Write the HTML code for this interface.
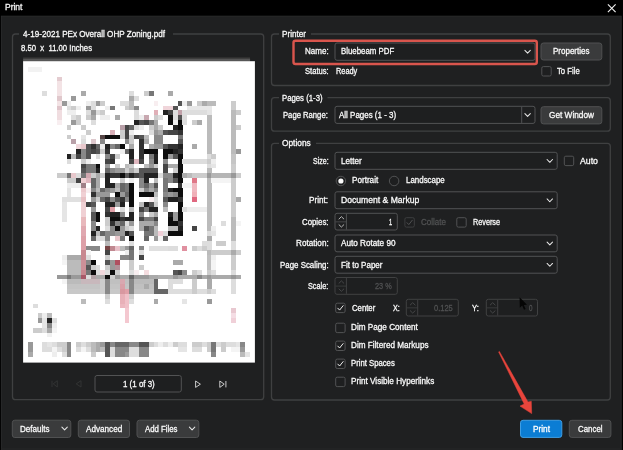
<!DOCTYPE html>
<html><head><meta charset="utf-8"><title>Print</title>
<style>
html,body{margin:0;padding:0;background:#000;}
body{width:623px;height:450px;overflow:hidden;position:relative;font-family:"Liberation Sans",sans-serif;}
.b{position:absolute;left:0;top:0}
.t{position:absolute;white-space:pre;display:block;will-change:transform;}
.u{display:block;white-space:pre;transform-origin:0 0;-webkit-text-stroke:0.3px currentColor;}
svg{overflow:visible}
</style></head><body>
<svg class="b" width="623" height="450" viewBox="0 0 623 450">
<rect x="1.4" y="16.2" width="619.8" height="434" fill="#1f2021" stroke="#2a2b2c" stroke-width="1"/>
<rect x="1.9" y="448" width="618.8" height="2" fill="#222324"/>
<defs><filter id="mb" x="-2%" y="-2%" width="104%" height="104%"><feGaussianBlur stdDeviation="0.62"/></filter></defs><rect x="23.1" y="57.0" width="227" height="2.2" fill="#2e2e2e"/><rect x="23.1" y="58.6" width="227" height="3" fill="#565656"/><rect x="23.1" y="61.2" width="231.8" height="301.4" fill="#fff"/><g filter="url(#mb)" shape-rendering="crispEdges"><rect x="27.93" y="66.91" width="14.54" height="4.88" fill="#f2f2f2"/><rect x="56.91" y="76.57" width="4.88" height="4.88" fill="#e4ccd0"/><rect x="56.91" y="81.40" width="4.88" height="4.88" fill="#f3e3e5"/><rect x="56.91" y="86.23" width="4.88" height="4.88" fill="#f3e3e5"/><rect x="42.42" y="91.06" width="4.88" height="4.88" fill="#dddddd"/><rect x="56.91" y="91.06" width="4.88" height="4.88" fill="#f3e3e5"/><rect x="81.06" y="91.06" width="4.88" height="4.88" fill="#aaaaaa"/><rect x="129.36" y="91.06" width="4.88" height="4.88" fill="#dddddd"/><rect x="143.85" y="91.06" width="4.88" height="4.88" fill="#cccccc"/><rect x="148.68" y="91.06" width="4.88" height="4.88" fill="#777777"/><rect x="168.00" y="91.06" width="4.88" height="4.88" fill="#aaaaaa"/><rect x="56.91" y="95.89" width="4.88" height="4.88" fill="#e0c8cc"/><rect x="71.40" y="95.89" width="4.88" height="4.88" fill="#999999"/><rect x="129.36" y="95.89" width="4.88" height="4.88" fill="#aaaaaa"/><rect x="134.19" y="95.89" width="4.88" height="4.88" fill="#dddddd"/><rect x="56.91" y="100.72" width="4.88" height="4.88" fill="#f3e3e5"/><rect x="61.74" y="100.72" width="4.88" height="4.88" fill="#999999"/><rect x="66.57" y="100.72" width="4.88" height="4.88" fill="#eeeeee"/><rect x="85.89" y="100.72" width="4.88" height="4.88" fill="#eeeeee"/><rect x="90.72" y="100.72" width="4.88" height="4.88" fill="#dddddd"/><rect x="95.55" y="100.72" width="4.88" height="4.88" fill="#999999"/><rect x="100.38" y="100.72" width="4.88" height="4.88" fill="#cccccc"/><rect x="119.70" y="100.72" width="9.71" height="4.88" fill="#dddddd"/><rect x="129.36" y="100.72" width="4.88" height="4.88" fill="#bbbbbb"/><rect x="153.51" y="100.72" width="4.88" height="4.88" fill="#f8eef0"/><rect x="177.66" y="100.72" width="4.88" height="4.88" fill="#555555"/><rect x="182.49" y="100.72" width="4.88" height="4.88" fill="#eeeeee"/><rect x="187.32" y="100.72" width="4.88" height="4.88" fill="#999999"/><rect x="196.98" y="100.72" width="4.88" height="4.88" fill="#cccccc"/><rect x="201.81" y="100.72" width="4.88" height="4.88" fill="#aaaaaa"/><rect x="206.64" y="100.72" width="9.71" height="4.88" fill="#bbbbbb"/><rect x="230.79" y="100.72" width="4.88" height="4.88" fill="#cccccc"/><rect x="56.91" y="105.55" width="4.88" height="4.88" fill="#dfc5ca"/><rect x="66.57" y="105.55" width="4.88" height="4.88" fill="#dddddd"/><rect x="71.40" y="105.55" width="4.88" height="4.88" fill="#cccccc"/><rect x="76.23" y="105.55" width="4.88" height="4.88" fill="#eeeeee"/><rect x="85.89" y="105.55" width="4.88" height="4.88" fill="#999999"/><rect x="90.72" y="105.55" width="4.88" height="4.88" fill="#dddddd"/><rect x="105.21" y="105.55" width="4.88" height="4.88" fill="#eeeeee"/><rect x="110.04" y="105.55" width="4.88" height="4.88" fill="#777777"/><rect x="124.53" y="105.55" width="4.88" height="4.88" fill="#cccccc"/><rect x="129.36" y="105.55" width="4.88" height="4.88" fill="#bbbbbb"/><rect x="134.19" y="105.55" width="4.88" height="4.88" fill="#888888"/><rect x="163.17" y="105.55" width="9.71" height="4.88" fill="#f0d5da"/><rect x="172.83" y="105.55" width="4.88" height="4.88" fill="#555555"/><rect x="187.32" y="105.55" width="24.20" height="4.88" fill="#e8e8e8"/><rect x="230.79" y="105.55" width="4.88" height="4.88" fill="#cccccc"/><rect x="56.91" y="110.38" width="4.88" height="4.88" fill="#f0dde0"/><rect x="66.57" y="110.38" width="9.71" height="4.88" fill="#eeeeee"/><rect x="85.89" y="110.38" width="4.88" height="4.88" fill="#dddddd"/><rect x="90.72" y="110.38" width="4.88" height="4.88" fill="#999999"/><rect x="95.55" y="110.38" width="4.88" height="4.88" fill="#dddddd"/><rect x="100.38" y="110.38" width="4.88" height="4.88" fill="#cccccc"/><rect x="134.19" y="110.38" width="4.88" height="4.88" fill="#dddddd"/><rect x="153.51" y="110.38" width="4.88" height="4.88" fill="#e0b0b8"/><rect x="163.17" y="110.38" width="4.88" height="4.88" fill="#222222"/><rect x="168.00" y="110.38" width="4.88" height="4.88" fill="#444444"/><rect x="172.83" y="110.38" width="4.88" height="4.88" fill="#dddddd"/><rect x="177.66" y="110.38" width="4.88" height="4.88" fill="#c0a0a8"/><rect x="182.49" y="110.38" width="24.20" height="4.88" fill="#dddddd"/><rect x="206.64" y="110.38" width="4.88" height="4.88" fill="#e5e5e5"/><rect x="230.79" y="110.38" width="4.88" height="4.88" fill="#bbbbbb"/><rect x="235.62" y="110.38" width="4.88" height="4.88" fill="#cccccc"/><rect x="56.91" y="115.21" width="4.88" height="4.88" fill="#f0dde0"/><rect x="71.40" y="115.21" width="4.88" height="4.88" fill="#dddddd"/><rect x="76.23" y="115.21" width="4.88" height="4.88" fill="#cccccc"/><rect x="85.89" y="115.21" width="4.88" height="4.88" fill="#cccccc"/><rect x="90.72" y="115.21" width="4.88" height="4.88" fill="#aaaaaa"/><rect x="100.38" y="115.21" width="9.71" height="4.88" fill="#eeeeee"/><rect x="114.87" y="115.21" width="4.88" height="4.88" fill="#aaaaaa"/><rect x="134.19" y="115.21" width="4.88" height="4.88" fill="#dddddd"/><rect x="139.02" y="115.21" width="4.88" height="4.88" fill="#eeeeee"/><rect x="143.85" y="115.21" width="4.88" height="4.88" fill="#c8a8b0"/><rect x="153.51" y="115.21" width="4.88" height="4.88" fill="#cccccc"/><rect x="158.34" y="115.21" width="4.88" height="4.88" fill="#dddddd"/><rect x="168.00" y="115.21" width="4.88" height="4.88" fill="#111111"/><rect x="172.83" y="115.21" width="4.88" height="4.88" fill="#dddddd"/><rect x="177.66" y="115.21" width="4.88" height="4.88" fill="#555555"/><rect x="182.49" y="115.21" width="4.88" height="4.88" fill="#dddddd"/><rect x="206.64" y="115.21" width="4.88" height="4.88" fill="#bbbbbb"/><rect x="230.79" y="115.21" width="4.88" height="4.88" fill="#bbbbbb"/><rect x="56.91" y="120.04" width="4.88" height="4.88" fill="#f8eef0"/><rect x="71.40" y="120.04" width="4.88" height="4.88" fill="#999999"/><rect x="76.23" y="120.04" width="4.88" height="4.88" fill="#cccccc"/><rect x="90.72" y="120.04" width="4.88" height="4.88" fill="#dddddd"/><rect x="134.19" y="120.04" width="4.88" height="4.88" fill="#222222"/><rect x="139.02" y="120.04" width="4.88" height="4.88" fill="#555555"/><rect x="143.85" y="120.04" width="4.88" height="4.88" fill="#444444"/><rect x="148.68" y="120.04" width="4.88" height="4.88" fill="#777777"/><rect x="153.51" y="120.04" width="4.88" height="4.88" fill="#aaaaaa"/><rect x="168.00" y="120.04" width="4.88" height="4.88" fill="#111111"/><rect x="172.83" y="120.04" width="4.88" height="4.88" fill="#eeeeee"/><rect x="177.66" y="120.04" width="4.88" height="4.88" fill="#111111"/><rect x="182.49" y="120.04" width="4.88" height="4.88" fill="#dddddd"/><rect x="192.15" y="120.04" width="4.88" height="4.88" fill="#cccccc"/><rect x="196.98" y="120.04" width="4.88" height="4.88" fill="#aaaaaa"/><rect x="206.64" y="120.04" width="4.88" height="4.88" fill="#bbbbbb"/><rect x="230.79" y="120.04" width="4.88" height="4.88" fill="#bbbbbb"/><rect x="66.57" y="124.87" width="4.88" height="4.88" fill="#cccccc"/><rect x="81.06" y="124.87" width="4.88" height="4.88" fill="#cccccc"/><rect x="119.70" y="124.87" width="4.88" height="4.88" fill="#b8a0a8"/><rect x="124.53" y="124.87" width="4.88" height="4.88" fill="#444444"/><rect x="129.36" y="124.87" width="4.88" height="4.88" fill="#666666"/><rect x="134.19" y="124.87" width="4.88" height="4.88" fill="#dddddd"/><rect x="139.02" y="124.87" width="4.88" height="4.88" fill="#eeeeee"/><rect x="148.68" y="124.87" width="4.88" height="4.88" fill="#cccccc"/><rect x="153.51" y="124.87" width="4.88" height="4.88" fill="#aaaaaa"/><rect x="158.34" y="124.87" width="4.88" height="4.88" fill="#cccccc"/><rect x="172.83" y="124.87" width="4.88" height="4.88" fill="#222222"/><rect x="177.66" y="124.87" width="4.88" height="4.88" fill="#111111"/><rect x="206.64" y="124.87" width="4.88" height="4.88" fill="#bbbbbb"/><rect x="230.79" y="124.87" width="4.88" height="4.88" fill="#bbbbbb"/><rect x="235.62" y="124.87" width="4.88" height="4.88" fill="#cccccc"/><rect x="85.89" y="129.70" width="4.88" height="4.88" fill="#cccccc"/><rect x="110.04" y="129.70" width="4.88" height="4.88" fill="#d8b0b8"/><rect x="119.70" y="129.70" width="4.88" height="4.88" fill="#cccccc"/><rect x="124.53" y="129.70" width="4.88" height="4.88" fill="#444444"/><rect x="129.36" y="129.70" width="4.88" height="4.88" fill="#eeeeee"/><rect x="148.68" y="129.70" width="4.88" height="4.88" fill="#dddddd"/><rect x="153.51" y="129.70" width="4.88" height="4.88" fill="#999999"/><rect x="158.34" y="129.70" width="4.88" height="4.88" fill="#aaaaaa"/><rect x="163.17" y="129.70" width="4.88" height="4.88" fill="#555555"/><rect x="168.00" y="129.70" width="9.71" height="4.88" fill="#444444"/><rect x="177.66" y="129.70" width="4.88" height="4.88" fill="#333333"/><rect x="206.64" y="129.70" width="4.88" height="4.88" fill="#bbbbbb"/><rect x="230.79" y="129.70" width="4.88" height="4.88" fill="#bbbbbb"/><rect x="66.57" y="134.53" width="4.88" height="4.88" fill="#cccccc"/><rect x="81.06" y="134.53" width="4.88" height="4.88" fill="#e5e5e5"/><rect x="100.38" y="134.53" width="4.88" height="4.88" fill="#554444"/><rect x="105.21" y="134.53" width="14.54" height="4.88" fill="#111111"/><rect x="119.70" y="134.53" width="4.88" height="4.88" fill="#cccccc"/><rect x="124.53" y="134.53" width="4.88" height="4.88" fill="#444444"/><rect x="129.36" y="134.53" width="4.88" height="4.88" fill="#cccccc"/><rect x="134.19" y="134.53" width="4.88" height="4.88" fill="#444444"/><rect x="139.02" y="134.53" width="4.88" height="4.88" fill="#555555"/><rect x="143.85" y="134.53" width="4.88" height="4.88" fill="#bbbbbb"/><rect x="153.51" y="134.53" width="9.71" height="4.88" fill="#888888"/><rect x="177.66" y="134.53" width="4.88" height="4.88" fill="#777777"/><rect x="206.64" y="134.53" width="4.88" height="4.88" fill="#bbbbbb"/><rect x="230.79" y="134.53" width="4.88" height="4.88" fill="#bbbbbb"/><rect x="71.40" y="139.36" width="4.88" height="4.88" fill="#b8a0a8"/><rect x="81.06" y="139.36" width="4.88" height="4.88" fill="#dddddd"/><rect x="90.72" y="139.36" width="4.88" height="4.88" fill="#ddc8cc"/><rect x="100.38" y="139.36" width="4.88" height="4.88" fill="#888888"/><rect x="124.53" y="139.36" width="4.88" height="4.88" fill="#888888"/><rect x="129.36" y="139.36" width="4.88" height="4.88" fill="#cccccc"/><rect x="139.02" y="139.36" width="4.88" height="4.88" fill="#333333"/><rect x="143.85" y="139.36" width="4.88" height="4.88" fill="#aaaaaa"/><rect x="153.51" y="139.36" width="9.71" height="4.88" fill="#888888"/><rect x="177.66" y="139.36" width="4.88" height="4.88" fill="#555555"/><rect x="206.64" y="139.36" width="4.88" height="4.88" fill="#bbbbbb"/><rect x="230.79" y="139.36" width="4.88" height="4.88" fill="#bbbbbb"/><rect x="76.23" y="144.19" width="4.88" height="4.88" fill="#f0d8dc"/><rect x="81.06" y="144.19" width="4.88" height="4.88" fill="#e8c8cc"/><rect x="85.89" y="144.19" width="4.88" height="4.88" fill="#555555"/><rect x="90.72" y="144.19" width="4.88" height="4.88" fill="#333333"/><rect x="95.55" y="144.19" width="4.88" height="4.88" fill="#666666"/><rect x="100.38" y="144.19" width="4.88" height="4.88" fill="#eeeeee"/><rect x="105.21" y="144.19" width="4.88" height="4.88" fill="#222222"/><rect x="110.04" y="144.19" width="4.88" height="4.88" fill="#888888"/><rect x="114.87" y="144.19" width="4.88" height="4.88" fill="#666666"/><rect x="119.70" y="144.19" width="4.88" height="4.88" fill="#111111"/><rect x="129.36" y="144.19" width="4.88" height="4.88" fill="#aaaaaa"/><rect x="139.02" y="144.19" width="4.88" height="4.88" fill="#333333"/><rect x="148.68" y="144.19" width="4.88" height="4.88" fill="#aaaaaa"/><rect x="153.51" y="144.19" width="9.71" height="4.88" fill="#999999"/><rect x="163.17" y="144.19" width="4.88" height="4.88" fill="#555555"/><rect x="168.00" y="144.19" width="9.71" height="4.88" fill="#333333"/><rect x="177.66" y="144.19" width="4.88" height="4.88" fill="#222222"/><rect x="192.15" y="144.19" width="4.88" height="4.88" fill="#aaaaaa"/><rect x="206.64" y="144.19" width="4.88" height="4.88" fill="#bbbbbb"/><rect x="230.79" y="144.19" width="4.88" height="4.88" fill="#bbbbbb"/><rect x="76.23" y="149.02" width="4.88" height="4.88" fill="#222222"/><rect x="81.06" y="149.02" width="4.88" height="4.88" fill="#888888"/><rect x="85.89" y="149.02" width="4.88" height="4.88" fill="#555555"/><rect x="90.72" y="149.02" width="4.88" height="4.88" fill="#444444"/><rect x="95.55" y="149.02" width="4.88" height="4.88" fill="#555555"/><rect x="100.38" y="149.02" width="4.88" height="4.88" fill="#cccccc"/><rect x="105.21" y="149.02" width="4.88" height="4.88" fill="#333333"/><rect x="119.70" y="149.02" width="4.88" height="4.88" fill="#eeeeee"/><rect x="124.53" y="149.02" width="4.88" height="4.88" fill="#666666"/><rect x="129.36" y="149.02" width="4.88" height="4.88" fill="#222222"/><rect x="139.02" y="149.02" width="4.88" height="4.88" fill="#333333"/><rect x="143.85" y="149.02" width="14.54" height="4.88" fill="#111111"/><rect x="163.17" y="149.02" width="9.71" height="4.88" fill="#111111"/><rect x="172.83" y="149.02" width="4.88" height="4.88" fill="#222222"/><rect x="177.66" y="149.02" width="4.88" height="4.88" fill="#333333"/><rect x="206.64" y="149.02" width="4.88" height="4.88" fill="#bbbbbb"/><rect x="230.79" y="149.02" width="4.88" height="4.88" fill="#bbbbbb"/><rect x="235.62" y="149.02" width="4.88" height="4.88" fill="#999999"/><rect x="66.57" y="153.85" width="4.88" height="4.88" fill="#222222"/><rect x="71.40" y="153.85" width="4.88" height="4.88" fill="#bbbbbb"/><rect x="76.23" y="153.85" width="4.88" height="4.88" fill="#444444"/><rect x="81.06" y="153.85" width="4.88" height="4.88" fill="#888888"/><rect x="85.89" y="153.85" width="4.88" height="4.88" fill="#555555"/><rect x="95.55" y="153.85" width="4.88" height="4.88" fill="#dddddd"/><rect x="105.21" y="153.85" width="4.88" height="4.88" fill="#888888"/><rect x="110.04" y="153.85" width="4.88" height="4.88" fill="#444444"/><rect x="114.87" y="153.85" width="4.88" height="4.88" fill="#cccccc"/><rect x="129.36" y="153.85" width="4.88" height="4.88" fill="#222222"/><rect x="139.02" y="153.85" width="4.88" height="4.88" fill="#333333"/><rect x="148.68" y="153.85" width="4.88" height="4.88" fill="#777777"/><rect x="153.51" y="153.85" width="4.88" height="4.88" fill="#222222"/><rect x="163.17" y="153.85" width="4.88" height="4.88" fill="#111111"/><rect x="168.00" y="153.85" width="4.88" height="4.88" fill="#999999"/><rect x="172.83" y="153.85" width="4.88" height="4.88" fill="#555555"/><rect x="177.66" y="153.85" width="4.88" height="4.88" fill="#111111"/><rect x="206.64" y="153.85" width="4.88" height="4.88" fill="#dddddd"/><rect x="211.47" y="153.85" width="4.88" height="4.88" fill="#cccccc"/><rect x="230.79" y="153.85" width="4.88" height="4.88" fill="#c5c5c5"/><rect x="66.57" y="158.68" width="4.88" height="4.88" fill="#dddddd"/><rect x="81.06" y="158.68" width="4.88" height="4.88" fill="#cccccc"/><rect x="85.89" y="158.68" width="4.88" height="4.88" fill="#eeeeee"/><rect x="105.21" y="158.68" width="4.88" height="4.88" fill="#444444"/><rect x="110.04" y="158.68" width="4.88" height="4.88" fill="#333333"/><rect x="129.36" y="158.68" width="4.88" height="4.88" fill="#444444"/><rect x="134.19" y="158.68" width="4.88" height="4.88" fill="#e0b8c0"/><rect x="139.02" y="158.68" width="4.88" height="4.88" fill="#444444"/><rect x="148.68" y="158.68" width="4.88" height="4.88" fill="#888888"/><rect x="153.51" y="158.68" width="4.88" height="4.88" fill="#222222"/><rect x="163.17" y="158.68" width="4.88" height="4.88" fill="#888888"/><rect x="177.66" y="158.68" width="4.88" height="4.88" fill="#111111"/><rect x="182.49" y="158.68" width="24.20" height="4.88" fill="#dddddd"/><rect x="206.64" y="158.68" width="4.88" height="4.88" fill="#cccccc"/><rect x="211.47" y="158.68" width="4.88" height="4.88" fill="#eeeeee"/><rect x="230.79" y="158.68" width="4.88" height="4.88" fill="#c5c5c5"/><rect x="81.06" y="163.51" width="4.88" height="4.88" fill="#444444"/><rect x="85.89" y="163.51" width="9.71" height="4.88" fill="#777777"/><rect x="95.55" y="163.51" width="4.88" height="4.88" fill="#111111"/><rect x="105.21" y="163.51" width="4.88" height="4.88" fill="#999999"/><rect x="114.87" y="163.51" width="4.88" height="4.88" fill="#cccccc"/><rect x="124.53" y="163.51" width="4.88" height="4.88" fill="#bbbbbb"/><rect x="129.36" y="163.51" width="4.88" height="4.88" fill="#cccccc"/><rect x="143.85" y="163.51" width="4.88" height="4.88" fill="#bbbbbb"/><rect x="148.68" y="163.51" width="4.88" height="4.88" fill="#999999"/><rect x="153.51" y="163.51" width="4.88" height="4.88" fill="#cccccc"/><rect x="163.17" y="163.51" width="4.88" height="4.88" fill="#444444"/><rect x="168.00" y="163.51" width="9.71" height="4.88" fill="#aaaaaa"/><rect x="177.66" y="163.51" width="4.88" height="4.88" fill="#111111"/><rect x="206.64" y="163.51" width="4.88" height="4.88" fill="#dddddd"/><rect x="211.47" y="163.51" width="4.88" height="4.88" fill="#e5e5e5"/><rect x="230.79" y="163.51" width="4.88" height="4.88" fill="#cccccc"/><rect x="81.06" y="168.34" width="4.88" height="4.88" fill="#555555"/><rect x="85.89" y="168.34" width="9.71" height="4.88" fill="#777777"/><rect x="95.55" y="168.34" width="4.88" height="4.88" fill="#222222"/><rect x="105.21" y="168.34" width="4.88" height="4.88" fill="#666666"/><rect x="110.04" y="168.34" width="4.88" height="4.88" fill="#888888"/><rect x="114.87" y="168.34" width="9.71" height="4.88" fill="#999999"/><rect x="124.53" y="168.34" width="4.88" height="4.88" fill="#cccccc"/><rect x="129.36" y="168.34" width="4.88" height="4.88" fill="#aaaaaa"/><rect x="134.19" y="168.34" width="4.88" height="4.88" fill="#cccccc"/><rect x="139.02" y="168.34" width="19.37" height="4.88" fill="#555555"/><rect x="163.17" y="168.34" width="4.88" height="4.88" fill="#444444"/><rect x="172.83" y="168.34" width="4.88" height="4.88" fill="#cccccc"/><rect x="177.66" y="168.34" width="4.88" height="4.88" fill="#111111"/><rect x="206.64" y="168.34" width="4.88" height="4.88" fill="#bbbbbb"/><rect x="230.79" y="168.34" width="4.88" height="4.88" fill="#cccccc"/><rect x="56.91" y="173.17" width="9.71" height="4.88" fill="#cccccc"/><rect x="66.57" y="173.17" width="4.88" height="4.88" fill="#777777"/><rect x="71.40" y="173.17" width="4.88" height="4.88" fill="#e8c8cc"/><rect x="76.23" y="173.17" width="4.88" height="4.88" fill="#dddddd"/><rect x="81.06" y="173.17" width="4.88" height="4.88" fill="#777777"/><rect x="85.89" y="173.17" width="4.88" height="4.88" fill="#d0a8b0"/><rect x="90.72" y="173.17" width="4.88" height="4.88" fill="#cccccc"/><rect x="95.55" y="173.17" width="4.88" height="4.88" fill="#aaaaaa"/><rect x="100.38" y="173.17" width="4.88" height="4.88" fill="#cccccc"/><rect x="105.21" y="173.17" width="4.88" height="4.88" fill="#222222"/><rect x="110.04" y="173.17" width="9.71" height="4.88" fill="#333333"/><rect x="119.70" y="173.17" width="4.88" height="4.88" fill="#111111"/><rect x="124.53" y="173.17" width="4.88" height="4.88" fill="#555555"/><rect x="129.36" y="173.17" width="4.88" height="4.88" fill="#222222"/><rect x="134.19" y="173.17" width="4.88" height="4.88" fill="#444444"/><rect x="139.02" y="173.17" width="4.88" height="4.88" fill="#555555"/><rect x="143.85" y="173.17" width="14.54" height="4.88" fill="#222222"/><rect x="158.34" y="173.17" width="4.88" height="4.88" fill="#dddddd"/><rect x="163.17" y="173.17" width="9.71" height="4.88" fill="#888888"/><rect x="172.83" y="173.17" width="4.88" height="4.88" fill="#222222"/><rect x="177.66" y="173.17" width="4.88" height="4.88" fill="#111111"/><rect x="182.49" y="173.17" width="4.88" height="4.88" fill="#aaaaaa"/><rect x="187.32" y="173.17" width="4.88" height="4.88" fill="#bbbbbb"/><rect x="192.15" y="173.17" width="14.54" height="4.88" fill="#cccccc"/><rect x="206.64" y="173.17" width="4.88" height="4.88" fill="#999999"/><rect x="211.47" y="173.17" width="19.37" height="4.88" fill="#b5b5b5"/><rect x="230.79" y="173.17" width="4.88" height="4.88" fill="#999999"/><rect x="235.62" y="173.17" width="4.88" height="4.88" fill="#cccccc"/><rect x="66.57" y="178.00" width="9.71" height="4.88" fill="#cccccc"/><rect x="76.23" y="178.00" width="4.88" height="4.88" fill="#444444"/><rect x="81.06" y="178.00" width="4.88" height="4.88" fill="#f0d0d4"/><rect x="85.89" y="178.00" width="4.88" height="4.88" fill="#e0b8c0"/><rect x="90.72" y="178.00" width="4.88" height="4.88" fill="#666666"/><rect x="95.55" y="178.00" width="4.88" height="4.88" fill="#aaaaaa"/><rect x="105.21" y="178.00" width="4.88" height="4.88" fill="#222222"/><rect x="119.70" y="178.00" width="4.88" height="4.88" fill="#cccccc"/><rect x="129.36" y="178.00" width="4.88" height="4.88" fill="#eeeeee"/><rect x="139.02" y="178.00" width="4.88" height="4.88" fill="#888888"/><rect x="143.85" y="178.00" width="4.88" height="4.88" fill="#222222"/><rect x="153.51" y="178.00" width="4.88" height="4.88" fill="#bbbbbb"/><rect x="163.17" y="178.00" width="4.88" height="4.88" fill="#777777"/><rect x="168.00" y="178.00" width="4.88" height="4.88" fill="#888888"/><rect x="172.83" y="178.00" width="4.88" height="4.88" fill="#555555"/><rect x="177.66" y="178.00" width="4.88" height="4.88" fill="#111111"/><rect x="192.15" y="178.00" width="4.88" height="4.88" fill="#e07888"/><rect x="206.64" y="178.00" width="4.88" height="4.88" fill="#bbbbbb"/><rect x="211.47" y="178.00" width="19.37" height="4.88" fill="#f4f4f4"/><rect x="230.79" y="178.00" width="4.88" height="4.88" fill="#cccccc"/><rect x="66.57" y="182.83" width="14.54" height="4.88" fill="#eeeeee"/><rect x="81.06" y="182.83" width="4.88" height="4.88" fill="#a08088"/><rect x="90.72" y="182.83" width="4.88" height="4.88" fill="#666666"/><rect x="95.55" y="182.83" width="4.88" height="4.88" fill="#aaaaaa"/><rect x="105.21" y="182.83" width="9.71" height="4.88" fill="#222222"/><rect x="114.87" y="182.83" width="4.88" height="4.88" fill="#aaaaaa"/><rect x="119.70" y="182.83" width="4.88" height="4.88" fill="#666666"/><rect x="124.53" y="182.83" width="4.88" height="4.88" fill="#777777"/><rect x="129.36" y="182.83" width="4.88" height="4.88" fill="#111111"/><rect x="139.02" y="182.83" width="4.88" height="4.88" fill="#888888"/><rect x="143.85" y="182.83" width="4.88" height="4.88" fill="#666666"/><rect x="148.68" y="182.83" width="4.88" height="4.88" fill="#999999"/><rect x="153.51" y="182.83" width="4.88" height="4.88" fill="#555555"/><rect x="163.17" y="182.83" width="4.88" height="4.88" fill="#777777"/><rect x="177.66" y="182.83" width="4.88" height="4.88" fill="#333333"/><rect x="182.49" y="182.83" width="9.71" height="4.88" fill="#f4f4f4"/><rect x="192.15" y="182.83" width="4.88" height="4.88" fill="#f0b8c0"/><rect x="206.64" y="182.83" width="4.88" height="4.88" fill="#bbbbbb"/><rect x="230.79" y="182.83" width="4.88" height="4.88" fill="#cccccc"/><rect x="66.57" y="187.66" width="4.88" height="4.88" fill="#e5e5e5"/><rect x="81.06" y="187.66" width="4.88" height="4.88" fill="#ecc8cc"/><rect x="85.89" y="187.66" width="4.88" height="4.88" fill="#f8eef0"/><rect x="90.72" y="187.66" width="4.88" height="4.88" fill="#888888"/><rect x="95.55" y="187.66" width="4.88" height="4.88" fill="#bbbbbb"/><rect x="100.38" y="187.66" width="4.88" height="4.88" fill="#666666"/><rect x="105.21" y="187.66" width="4.88" height="4.88" fill="#888888"/><rect x="110.04" y="187.66" width="4.88" height="4.88" fill="#999999"/><rect x="114.87" y="187.66" width="4.88" height="4.88" fill="#bbbbbb"/><rect x="119.70" y="187.66" width="4.88" height="4.88" fill="#666666"/><rect x="124.53" y="187.66" width="4.88" height="4.88" fill="#777777"/><rect x="129.36" y="187.66" width="4.88" height="4.88" fill="#111111"/><rect x="139.02" y="187.66" width="4.88" height="4.88" fill="#cccccc"/><rect x="143.85" y="187.66" width="4.88" height="4.88" fill="#888888"/><rect x="148.68" y="187.66" width="4.88" height="4.88" fill="#aaaaaa"/><rect x="153.51" y="187.66" width="4.88" height="4.88" fill="#888888"/><rect x="163.17" y="187.66" width="4.88" height="4.88" fill="#777777"/><rect x="168.00" y="187.66" width="4.88" height="4.88" fill="#222222"/><rect x="172.83" y="187.66" width="9.71" height="4.88" fill="#111111"/><rect x="192.15" y="187.66" width="4.88" height="4.88" fill="#f0b8c0"/><rect x="206.64" y="187.66" width="4.88" height="4.88" fill="#bbbbbb"/><rect x="230.79" y="187.66" width="4.88" height="4.88" fill="#cccccc"/><rect x="66.57" y="192.49" width="4.88" height="4.88" fill="#e5e5e5"/><rect x="81.06" y="192.49" width="4.88" height="4.88" fill="#f0d0d4"/><rect x="90.72" y="192.49" width="4.88" height="4.88" fill="#333333"/><rect x="95.55" y="192.49" width="14.54" height="4.88" fill="#999999"/><rect x="114.87" y="192.49" width="4.88" height="4.88" fill="#111111"/><rect x="119.70" y="192.49" width="4.88" height="4.88" fill="#999999"/><rect x="124.53" y="192.49" width="4.88" height="4.88" fill="#666666"/><rect x="129.36" y="192.49" width="4.88" height="4.88" fill="#111111"/><rect x="139.02" y="192.49" width="14.54" height="4.88" fill="#111111"/><rect x="153.51" y="192.49" width="4.88" height="4.88" fill="#bbbbbb"/><rect x="163.17" y="192.49" width="4.88" height="4.88" fill="#888888"/><rect x="168.00" y="192.49" width="4.88" height="4.88" fill="#999999"/><rect x="172.83" y="192.49" width="4.88" height="4.88" fill="#888888"/><rect x="177.66" y="192.49" width="4.88" height="4.88" fill="#111111"/><rect x="192.15" y="192.49" width="4.88" height="4.88" fill="#f0b0b8"/><rect x="206.64" y="192.49" width="4.88" height="4.88" fill="#bbbbbb"/><rect x="230.79" y="192.49" width="4.88" height="4.88" fill="#cccccc"/><rect x="61.74" y="197.32" width="19.37" height="4.88" fill="#e0e0e0"/><rect x="81.06" y="197.32" width="4.88" height="4.88" fill="#e8c0c4"/><rect x="90.72" y="197.32" width="4.88" height="4.88" fill="#999999"/><rect x="95.55" y="197.32" width="4.88" height="4.88" fill="#cccccc"/><rect x="100.38" y="197.32" width="4.88" height="4.88" fill="#666666"/><rect x="105.21" y="197.32" width="4.88" height="4.88" fill="#444444"/><rect x="110.04" y="197.32" width="4.88" height="4.88" fill="#888888"/><rect x="114.87" y="197.32" width="4.88" height="4.88" fill="#555555"/><rect x="119.70" y="197.32" width="4.88" height="4.88" fill="#333333"/><rect x="124.53" y="197.32" width="4.88" height="4.88" fill="#888888"/><rect x="129.36" y="197.32" width="4.88" height="4.88" fill="#111111"/><rect x="148.68" y="197.32" width="4.88" height="4.88" fill="#f8eef0"/><rect x="153.51" y="197.32" width="4.88" height="4.88" fill="#dddddd"/><rect x="163.17" y="197.32" width="4.88" height="4.88" fill="#555555"/><rect x="168.00" y="197.32" width="9.71" height="4.88" fill="#222222"/><rect x="177.66" y="197.32" width="4.88" height="4.88" fill="#333333"/><rect x="192.15" y="197.32" width="4.88" height="4.88" fill="#e06880"/><rect x="206.64" y="197.32" width="4.88" height="4.88" fill="#bbbbbb"/><rect x="230.79" y="197.32" width="4.88" height="4.88" fill="#cccccc"/><rect x="235.62" y="197.32" width="4.88" height="4.88" fill="#aaaaaa"/><rect x="61.74" y="202.15" width="4.88" height="4.88" fill="#e5e5e5"/><rect x="81.06" y="202.15" width="4.88" height="4.88" fill="#f0d0d4"/><rect x="85.89" y="202.15" width="4.88" height="4.88" fill="#444444"/><rect x="90.72" y="202.15" width="4.88" height="4.88" fill="#555555"/><rect x="105.21" y="202.15" width="9.71" height="4.88" fill="#222222"/><rect x="114.87" y="202.15" width="4.88" height="4.88" fill="#999999"/><rect x="119.70" y="202.15" width="4.88" height="4.88" fill="#222222"/><rect x="129.36" y="202.15" width="4.88" height="4.88" fill="#111111"/><rect x="139.02" y="202.15" width="4.88" height="4.88" fill="#bbbbbb"/><rect x="143.85" y="202.15" width="4.88" height="4.88" fill="#222222"/><rect x="148.68" y="202.15" width="4.88" height="4.88" fill="#555555"/><rect x="153.51" y="202.15" width="4.88" height="4.88" fill="#cccccc"/><rect x="163.17" y="202.15" width="4.88" height="4.88" fill="#888888"/><rect x="177.66" y="202.15" width="4.88" height="4.88" fill="#111111"/><rect x="206.64" y="202.15" width="4.88" height="4.88" fill="#bbbbbb"/><rect x="230.79" y="202.15" width="4.88" height="4.88" fill="#cccccc"/><rect x="61.74" y="206.98" width="4.88" height="4.88" fill="#e5e5e5"/><rect x="81.06" y="206.98" width="4.88" height="4.88" fill="#f0d0d4"/><rect x="90.72" y="206.98" width="4.88" height="4.88" fill="#999999"/><rect x="105.21" y="206.98" width="4.88" height="4.88" fill="#444444"/><rect x="110.04" y="206.98" width="4.88" height="4.88" fill="#e0a0a8"/><rect x="119.70" y="206.98" width="4.88" height="4.88" fill="#dddddd"/><rect x="129.36" y="206.98" width="4.88" height="4.88" fill="#bbbbbb"/><rect x="139.02" y="206.98" width="4.88" height="4.88" fill="#444444"/><rect x="143.85" y="206.98" width="4.88" height="4.88" fill="#777777"/><rect x="148.68" y="206.98" width="9.71" height="4.88" fill="#222222"/><rect x="163.17" y="206.98" width="4.88" height="4.88" fill="#bbbbbb"/><rect x="177.66" y="206.98" width="4.88" height="4.88" fill="#111111"/><rect x="182.49" y="206.98" width="4.88" height="4.88" fill="#dddddd"/><rect x="187.32" y="206.98" width="19.37" height="4.88" fill="#eeeeee"/><rect x="206.64" y="206.98" width="4.88" height="4.88" fill="#bbbbbb"/><rect x="230.79" y="206.98" width="4.88" height="4.88" fill="#cccccc"/><rect x="61.74" y="211.81" width="4.88" height="4.88" fill="#e5e5e5"/><rect x="81.06" y="211.81" width="4.88" height="4.88" fill="#f0d0d4"/><rect x="90.72" y="211.81" width="4.88" height="4.88" fill="#555555"/><rect x="95.55" y="211.81" width="4.88" height="4.88" fill="#111111"/><rect x="105.21" y="211.81" width="4.88" height="4.88" fill="#333333"/><rect x="110.04" y="211.81" width="9.71" height="4.88" fill="#222222"/><rect x="119.70" y="211.81" width="4.88" height="4.88" fill="#888888"/><rect x="129.36" y="211.81" width="4.88" height="4.88" fill="#222222"/><rect x="139.02" y="211.81" width="4.88" height="4.88" fill="#888888"/><rect x="148.68" y="211.81" width="4.88" height="4.88" fill="#cccccc"/><rect x="153.51" y="211.81" width="4.88" height="4.88" fill="#aaaaaa"/><rect x="168.00" y="211.81" width="4.88" height="4.88" fill="#222222"/><rect x="172.83" y="211.81" width="4.88" height="4.88" fill="#999999"/><rect x="177.66" y="211.81" width="4.88" height="4.88" fill="#111111"/><rect x="206.64" y="211.81" width="4.88" height="4.88" fill="#bbbbbb"/><rect x="230.79" y="211.81" width="4.88" height="4.88" fill="#cccccc"/><rect x="61.74" y="216.64" width="4.88" height="4.88" fill="#e5e5e5"/><rect x="81.06" y="216.64" width="4.88" height="4.88" fill="#e8b8bc"/><rect x="90.72" y="216.64" width="4.88" height="4.88" fill="#555555"/><rect x="95.55" y="216.64" width="4.88" height="4.88" fill="#111111"/><rect x="105.21" y="216.64" width="4.88" height="4.88" fill="#cccccc"/><rect x="110.04" y="216.64" width="9.71" height="4.88" fill="#111111"/><rect x="119.70" y="216.64" width="4.88" height="4.88" fill="#333333"/><rect x="124.53" y="216.64" width="9.71" height="4.88" fill="#222222"/><rect x="139.02" y="216.64" width="4.88" height="4.88" fill="#444444"/><rect x="143.85" y="216.64" width="9.71" height="4.88" fill="#777777"/><rect x="153.51" y="216.64" width="4.88" height="4.88" fill="#444444"/><rect x="168.00" y="216.64" width="4.88" height="4.88" fill="#111111"/><rect x="172.83" y="216.64" width="4.88" height="4.88" fill="#999999"/><rect x="177.66" y="216.64" width="4.88" height="4.88" fill="#111111"/><rect x="206.64" y="216.64" width="4.88" height="4.88" fill="#bbbbbb"/><rect x="230.79" y="216.64" width="4.88" height="4.88" fill="#bbbbbb"/><rect x="81.06" y="221.47" width="4.88" height="4.88" fill="#e8b8bc"/><rect x="90.72" y="221.47" width="4.88" height="4.88" fill="#888888"/><rect x="105.21" y="221.47" width="4.88" height="4.88" fill="#cccccc"/><rect x="110.04" y="221.47" width="4.88" height="4.88" fill="#333333"/><rect x="114.87" y="221.47" width="4.88" height="4.88" fill="#888888"/><rect x="119.70" y="221.47" width="4.88" height="4.88" fill="#666666"/><rect x="124.53" y="221.47" width="4.88" height="4.88" fill="#dddddd"/><rect x="129.36" y="221.47" width="4.88" height="4.88" fill="#999999"/><rect x="139.02" y="221.47" width="14.54" height="4.88" fill="#aaaaaa"/><rect x="153.51" y="221.47" width="4.88" height="4.88" fill="#888888"/><rect x="168.00" y="221.47" width="9.71" height="4.88" fill="#111111"/><rect x="177.66" y="221.47" width="4.88" height="4.88" fill="#333333"/><rect x="206.64" y="221.47" width="4.88" height="4.88" fill="#bbbbbb"/><rect x="221.13" y="221.47" width="4.88" height="4.88" fill="#dddddd"/><rect x="230.79" y="221.47" width="4.88" height="4.88" fill="#bbbbbb"/><rect x="235.62" y="221.47" width="4.88" height="4.88" fill="#f4f4f4"/><rect x="81.06" y="226.30" width="4.88" height="4.88" fill="#e0a8b0"/><rect x="90.72" y="226.30" width="4.88" height="4.88" fill="#888888"/><rect x="95.55" y="226.30" width="4.88" height="4.88" fill="#222222"/><rect x="105.21" y="226.30" width="4.88" height="4.88" fill="#dddddd"/><rect x="110.04" y="226.30" width="4.88" height="4.88" fill="#888888"/><rect x="114.87" y="226.30" width="4.88" height="4.88" fill="#111111"/><rect x="119.70" y="226.30" width="4.88" height="4.88" fill="#999999"/><rect x="124.53" y="226.30" width="4.88" height="4.88" fill="#cccccc"/><rect x="129.36" y="226.30" width="4.88" height="4.88" fill="#dddddd"/><rect x="139.02" y="226.30" width="4.88" height="4.88" fill="#aaaaaa"/><rect x="143.85" y="226.30" width="4.88" height="4.88" fill="#555555"/><rect x="148.68" y="226.30" width="4.88" height="4.88" fill="#777777"/><rect x="153.51" y="226.30" width="4.88" height="4.88" fill="#bbbbbb"/><rect x="168.00" y="226.30" width="9.71" height="4.88" fill="#bbbbbb"/><rect x="177.66" y="226.30" width="4.88" height="4.88" fill="#222222"/><rect x="192.15" y="226.30" width="4.88" height="4.88" fill="#444444"/><rect x="206.64" y="226.30" width="4.88" height="4.88" fill="#bbbbbb"/><rect x="211.47" y="226.30" width="4.88" height="4.88" fill="#eeeeee"/><rect x="230.79" y="226.30" width="4.88" height="4.88" fill="#bbbbbb"/><rect x="81.06" y="231.13" width="4.88" height="4.88" fill="#e0a8b0"/><rect x="90.72" y="231.13" width="4.88" height="4.88" fill="#222222"/><rect x="95.55" y="231.13" width="4.88" height="4.88" fill="#bbbbbb"/><rect x="100.38" y="231.13" width="4.88" height="4.88" fill="#666666"/><rect x="105.21" y="231.13" width="9.71" height="4.88" fill="#888888"/><rect x="114.87" y="231.13" width="9.71" height="4.88" fill="#999999"/><rect x="124.53" y="231.13" width="4.88" height="4.88" fill="#222222"/><rect x="129.36" y="231.13" width="4.88" height="4.88" fill="#555555"/><rect x="143.85" y="231.13" width="9.71" height="4.88" fill="#777777"/><rect x="153.51" y="231.13" width="4.88" height="4.88" fill="#bbbbbb"/><rect x="158.34" y="231.13" width="4.88" height="4.88" fill="#f0d0d8"/><rect x="163.17" y="231.13" width="4.88" height="4.88" fill="#dddddd"/><rect x="168.00" y="231.13" width="14.54" height="4.88" fill="#111111"/><rect x="206.64" y="231.13" width="4.88" height="4.88" fill="#dddddd"/><rect x="211.47" y="231.13" width="4.88" height="4.88" fill="#e5e5e5"/><rect x="230.79" y="231.13" width="4.88" height="4.88" fill="#bbbbbb"/><rect x="81.06" y="235.96" width="4.88" height="4.88" fill="#dda0a8"/><rect x="90.72" y="235.96" width="4.88" height="4.88" fill="#666666"/><rect x="95.55" y="235.96" width="9.71" height="4.88" fill="#dddddd"/><rect x="105.21" y="235.96" width="4.88" height="4.88" fill="#888888"/><rect x="114.87" y="235.96" width="4.88" height="4.88" fill="#e8c8cc"/><rect x="119.70" y="235.96" width="4.88" height="4.88" fill="#777777"/><rect x="129.36" y="235.96" width="4.88" height="4.88" fill="#111111"/><rect x="143.85" y="235.96" width="4.88" height="4.88" fill="#666666"/><rect x="153.51" y="235.96" width="4.88" height="4.88" fill="#999999"/><rect x="158.34" y="235.96" width="4.88" height="4.88" fill="#f4f4f4"/><rect x="163.17" y="235.96" width="4.88" height="4.88" fill="#666666"/><rect x="206.64" y="235.96" width="4.88" height="4.88" fill="#aaaaaa"/><rect x="230.79" y="235.96" width="4.88" height="4.88" fill="#bbbbbb"/><rect x="81.06" y="240.79" width="4.88" height="4.88" fill="#dda0a8"/><rect x="105.21" y="240.79" width="4.88" height="4.88" fill="#bbbbbb"/><rect x="129.36" y="240.79" width="4.88" height="4.88" fill="#dddddd"/><rect x="201.81" y="240.79" width="9.71" height="4.88" fill="#dddddd"/><rect x="216.30" y="240.79" width="9.71" height="4.88" fill="#cccccc"/><rect x="230.79" y="240.79" width="4.88" height="4.88" fill="#dddddd"/><rect x="81.06" y="245.62" width="4.88" height="4.88" fill="#dda0a8"/><rect x="85.89" y="245.62" width="14.54" height="4.88" fill="#888888"/><rect x="105.21" y="245.62" width="4.88" height="4.88" fill="#774444"/><rect x="110.04" y="245.62" width="4.88" height="4.88" fill="#c08890"/><rect x="114.87" y="245.62" width="4.88" height="4.88" fill="#e8c0c8"/><rect x="119.70" y="245.62" width="4.88" height="4.88" fill="#bbbbbb"/><rect x="124.53" y="245.62" width="4.88" height="4.88" fill="#999999"/><rect x="129.36" y="245.62" width="4.88" height="4.88" fill="#666666"/><rect x="139.02" y="245.62" width="4.88" height="4.88" fill="#888888"/><rect x="148.68" y="245.62" width="19.37" height="4.88" fill="#e0e0e0"/><rect x="168.00" y="245.62" width="9.71" height="4.88" fill="#dddddd"/><rect x="182.49" y="245.62" width="4.88" height="4.88" fill="#e090a0"/><rect x="192.15" y="245.62" width="4.88" height="4.88" fill="#cccccc"/><rect x="196.98" y="245.62" width="4.88" height="4.88" fill="#dddddd"/><rect x="201.81" y="245.62" width="4.88" height="4.88" fill="#cccccc"/><rect x="206.64" y="245.62" width="4.88" height="4.88" fill="#dddddd"/><rect x="230.79" y="245.62" width="4.88" height="4.88" fill="#dddddd"/><rect x="81.06" y="250.45" width="4.88" height="4.88" fill="#c88890"/><rect x="85.89" y="250.45" width="4.88" height="4.88" fill="#f4f4f4"/><rect x="105.21" y="250.45" width="4.88" height="4.88" fill="#444444"/><rect x="124.53" y="250.45" width="4.88" height="4.88" fill="#eeeeee"/><rect x="129.36" y="250.45" width="4.88" height="4.88" fill="#777777"/><rect x="139.02" y="250.45" width="4.88" height="4.88" fill="#dddddd"/><rect x="206.64" y="250.45" width="4.88" height="4.88" fill="#bbbbbb"/><rect x="211.47" y="250.45" width="19.37" height="4.88" fill="#cccccc"/><rect x="230.79" y="250.45" width="4.88" height="4.88" fill="#aaaaaa"/><rect x="235.62" y="250.45" width="4.88" height="4.88" fill="#cccccc"/><rect x="61.74" y="255.28" width="4.88" height="4.88" fill="#eeeeee"/><rect x="66.57" y="255.28" width="14.54" height="4.88" fill="#aaaaaa"/><rect x="81.06" y="255.28" width="4.88" height="4.88" fill="#c88890"/><rect x="85.89" y="255.28" width="4.88" height="4.88" fill="#dddddd"/><rect x="105.21" y="255.28" width="4.88" height="4.88" fill="#cccccc"/><rect x="119.70" y="255.28" width="9.71" height="4.88" fill="#888888"/><rect x="129.36" y="255.28" width="4.88" height="4.88" fill="#777777"/><rect x="139.02" y="255.28" width="4.88" height="4.88" fill="#444444"/><rect x="206.64" y="255.28" width="4.88" height="4.88" fill="#c0c0c0"/><rect x="211.47" y="255.28" width="4.88" height="4.88" fill="#eeeeee"/><rect x="230.79" y="255.28" width="4.88" height="4.88" fill="#cccccc"/><rect x="61.74" y="260.11" width="4.88" height="4.88" fill="#f4f4f4"/><rect x="66.57" y="260.11" width="14.54" height="4.88" fill="#bbbbbb"/><rect x="81.06" y="260.11" width="4.88" height="4.88" fill="#cc9098"/><rect x="85.89" y="260.11" width="4.88" height="4.88" fill="#888888"/><rect x="90.72" y="260.11" width="4.88" height="4.88" fill="#111111"/><rect x="105.21" y="260.11" width="4.88" height="4.88" fill="#555555"/><rect x="110.04" y="260.11" width="4.88" height="4.88" fill="#999999"/><rect x="114.87" y="260.11" width="4.88" height="4.88" fill="#b05060"/><rect x="129.36" y="260.11" width="4.88" height="4.88" fill="#cccccc"/><rect x="172.83" y="260.11" width="9.71" height="4.88" fill="#aaaaaa"/><rect x="206.64" y="260.11" width="4.88" height="4.88" fill="#c0c0c0"/><rect x="211.47" y="260.11" width="4.88" height="4.88" fill="#f4f4f4"/><rect x="230.79" y="260.11" width="4.88" height="4.88" fill="#cccccc"/><rect x="66.57" y="264.94" width="14.54" height="4.88" fill="#bbbbbb"/><rect x="81.06" y="264.94" width="4.88" height="4.88" fill="#cc9098"/><rect x="85.89" y="264.94" width="4.88" height="4.88" fill="#555555"/><rect x="90.72" y="264.94" width="4.88" height="4.88" fill="#cccccc"/><rect x="95.55" y="264.94" width="4.88" height="4.88" fill="#dddddd"/><rect x="105.21" y="264.94" width="4.88" height="4.88" fill="#cccccc"/><rect x="110.04" y="264.94" width="4.88" height="4.88" fill="#999999"/><rect x="114.87" y="264.94" width="4.88" height="4.88" fill="#b09098"/><rect x="129.36" y="264.94" width="4.88" height="4.88" fill="#cccccc"/><rect x="139.02" y="264.94" width="4.88" height="4.88" fill="#cccccc"/><rect x="206.64" y="264.94" width="4.88" height="4.88" fill="#c0c0c0"/><rect x="211.47" y="264.94" width="4.88" height="4.88" fill="#f4f4f4"/><rect x="230.79" y="264.94" width="4.88" height="4.88" fill="#cccccc"/><rect x="66.57" y="269.77" width="14.54" height="4.88" fill="#bbbbbb"/><rect x="81.06" y="269.77" width="4.88" height="4.88" fill="#c88890"/><rect x="85.89" y="269.77" width="4.88" height="4.88" fill="#777777"/><rect x="90.72" y="269.77" width="4.88" height="4.88" fill="#111111"/><rect x="95.55" y="269.77" width="4.88" height="4.88" fill="#dddddd"/><rect x="100.38" y="269.77" width="4.88" height="4.88" fill="#f0d8dc"/><rect x="105.21" y="269.77" width="4.88" height="4.88" fill="#dddddd"/><rect x="110.04" y="269.77" width="4.88" height="4.88" fill="#111111"/><rect x="114.87" y="269.77" width="4.88" height="4.88" fill="#cccccc"/><rect x="129.36" y="269.77" width="4.88" height="4.88" fill="#dddddd"/><rect x="134.19" y="269.77" width="4.88" height="4.88" fill="#f8eef0"/><rect x="143.85" y="269.77" width="4.88" height="4.88" fill="#f4dde0"/><rect x="172.83" y="269.77" width="4.88" height="4.88" fill="#555555"/><rect x="177.66" y="269.77" width="4.88" height="4.88" fill="#444444"/><rect x="182.49" y="269.77" width="4.88" height="4.88" fill="#888888"/><rect x="192.15" y="269.77" width="4.88" height="4.88" fill="#cccccc"/><rect x="196.98" y="269.77" width="4.88" height="4.88" fill="#dddddd"/><rect x="206.64" y="269.77" width="4.88" height="4.88" fill="#cccccc"/><rect x="211.47" y="269.77" width="4.88" height="4.88" fill="#dddddd"/><rect x="230.79" y="269.77" width="4.88" height="4.88" fill="#dddddd"/><rect x="56.91" y="274.60" width="9.71" height="4.88" fill="#999999"/><rect x="66.57" y="274.60" width="4.88" height="4.88" fill="#777777"/><rect x="71.40" y="274.60" width="9.71" height="4.88" fill="#999999"/><rect x="81.06" y="274.60" width="4.88" height="4.88" fill="#a85868"/><rect x="85.89" y="274.60" width="4.88" height="4.88" fill="#dddddd"/><rect x="90.72" y="274.60" width="4.88" height="4.88" fill="#b0a0a4"/><rect x="95.55" y="274.60" width="9.71" height="4.88" fill="#aaaaaa"/><rect x="105.21" y="274.60" width="4.88" height="4.88" fill="#111111"/><rect x="110.04" y="274.60" width="4.88" height="4.88" fill="#cccccc"/><rect x="114.87" y="274.60" width="4.88" height="4.88" fill="#999999"/><rect x="119.70" y="274.60" width="9.71" height="4.88" fill="#aaaaaa"/><rect x="129.36" y="274.60" width="4.88" height="4.88" fill="#666666"/><rect x="134.19" y="274.60" width="14.54" height="4.88" fill="#999999"/><rect x="148.68" y="274.60" width="9.71" height="4.88" fill="#aaaaaa"/><rect x="158.34" y="274.60" width="14.54" height="4.88" fill="#b0b0b0"/><rect x="172.83" y="274.60" width="4.88" height="4.88" fill="#999999"/><rect x="177.66" y="274.60" width="19.37" height="4.88" fill="#aaaaaa"/><rect x="196.98" y="274.60" width="4.88" height="4.88" fill="#888888"/><rect x="201.81" y="274.60" width="4.88" height="4.88" fill="#aaaaaa"/><rect x="206.64" y="274.60" width="4.88" height="4.88" fill="#999999"/><rect x="211.47" y="274.60" width="19.37" height="4.88" fill="#aaaaaa"/><rect x="230.79" y="274.60" width="4.88" height="4.88" fill="#999999"/><rect x="235.62" y="274.60" width="4.88" height="4.88" fill="#aaaaaa"/><rect x="61.74" y="279.43" width="4.88" height="4.88" fill="#f4f4f4"/><rect x="66.57" y="279.43" width="14.54" height="4.88" fill="#bbbbbb"/><rect x="81.06" y="279.43" width="19.37" height="4.88" fill="#c8b8bc"/><rect x="100.38" y="279.43" width="4.88" height="4.88" fill="#cccccc"/><rect x="105.21" y="279.43" width="4.88" height="4.88" fill="#888888"/><rect x="110.04" y="279.43" width="9.71" height="4.88" fill="#c0c0c0"/><rect x="119.70" y="279.43" width="4.88" height="4.88" fill="#d8a8b0"/><rect x="124.53" y="279.43" width="4.88" height="4.88" fill="#c0c0c0"/><rect x="129.36" y="279.43" width="4.88" height="4.88" fill="#888888"/><rect x="134.19" y="279.43" width="19.37" height="4.88" fill="#bbbbbb"/><rect x="153.51" y="279.43" width="4.88" height="4.88" fill="#666666"/><rect x="168.00" y="279.43" width="14.54" height="4.88" fill="#dddddd"/><rect x="192.15" y="279.43" width="4.88" height="4.88" fill="#cccccc"/><rect x="206.64" y="279.43" width="4.88" height="4.88" fill="#aaaaaa"/><rect x="230.79" y="279.43" width="4.88" height="4.88" fill="#dddddd"/><rect x="66.57" y="284.26" width="33.86" height="4.88" fill="#c4c4c4"/><rect x="100.38" y="284.26" width="4.88" height="4.88" fill="#cccccc"/><rect x="105.21" y="284.26" width="4.88" height="4.88" fill="#888888"/><rect x="110.04" y="284.26" width="9.71" height="4.88" fill="#c4c4c4"/><rect x="119.70" y="284.26" width="4.88" height="4.88" fill="#d8a0a8"/><rect x="124.53" y="284.26" width="4.88" height="4.88" fill="#c4c4c4"/><rect x="129.36" y="284.26" width="4.88" height="4.88" fill="#888888"/><rect x="134.19" y="284.26" width="9.71" height="4.88" fill="#c0c0c0"/><rect x="143.85" y="284.26" width="4.88" height="4.88" fill="#aaaaaa"/><rect x="148.68" y="284.26" width="4.88" height="4.88" fill="#c0c0c0"/><rect x="153.51" y="284.26" width="4.88" height="4.88" fill="#666666"/><rect x="168.00" y="284.26" width="4.88" height="4.88" fill="#dddddd"/><rect x="192.15" y="284.26" width="4.88" height="4.88" fill="#cccccc"/><rect x="206.64" y="284.26" width="4.88" height="4.88" fill="#aaaaaa"/><rect x="230.79" y="284.26" width="4.88" height="4.88" fill="#dddddd"/><rect x="66.57" y="289.09" width="33.86" height="4.88" fill="#c8c8c8"/><rect x="100.38" y="289.09" width="4.88" height="4.88" fill="#cccccc"/><rect x="105.21" y="289.09" width="4.88" height="4.88" fill="#888888"/><rect x="110.04" y="289.09" width="9.71" height="4.88" fill="#c8c8c8"/><rect x="119.70" y="289.09" width="4.88" height="4.88" fill="#d898a0"/><rect x="124.53" y="289.09" width="4.88" height="4.88" fill="#e0a0a8"/><rect x="129.36" y="289.09" width="4.88" height="4.88" fill="#888888"/><rect x="134.19" y="289.09" width="19.37" height="4.88" fill="#c4c4c4"/><rect x="153.51" y="289.09" width="14.54" height="4.88" fill="#666666"/><rect x="168.00" y="289.09" width="24.20" height="4.88" fill="#dddddd"/><rect x="192.15" y="289.09" width="4.88" height="4.88" fill="#cccccc"/><rect x="196.98" y="289.09" width="9.71" height="4.88" fill="#dddddd"/><rect x="206.64" y="289.09" width="4.88" height="4.88" fill="#cccccc"/><rect x="211.47" y="289.09" width="4.88" height="4.88" fill="#dddddd"/><rect x="230.79" y="289.09" width="4.88" height="4.88" fill="#dddddd"/><rect x="105.21" y="293.92" width="4.88" height="4.88" fill="#cccccc"/><rect x="119.70" y="293.92" width="4.88" height="4.88" fill="#e8b0b8"/><rect x="124.53" y="293.92" width="4.88" height="4.88" fill="#f0c0c8"/><rect x="129.36" y="293.92" width="4.88" height="4.88" fill="#cccccc"/><rect x="81.06" y="298.75" width="4.88" height="4.88" fill="#bbbbbb"/><rect x="105.21" y="298.75" width="4.88" height="4.88" fill="#dddddd"/><rect x="119.70" y="298.75" width="4.88" height="4.88" fill="#e8b0b8"/><rect x="124.53" y="298.75" width="4.88" height="4.88" fill="#f0c0c8"/><rect x="129.36" y="298.75" width="4.88" height="4.88" fill="#dddddd"/><rect x="153.51" y="298.75" width="4.88" height="4.88" fill="#aaaaaa"/><rect x="182.49" y="298.75" width="4.88" height="4.88" fill="#e5e5e5"/><rect x="206.64" y="298.75" width="4.88" height="4.88" fill="#999999"/><rect x="32.76" y="303.58" width="4.88" height="4.88" fill="#dddddd"/><rect x="119.70" y="303.58" width="4.88" height="4.88" fill="#ecb8c0"/><rect x="124.53" y="303.58" width="4.88" height="4.88" fill="#f0c0c8"/><rect x="124.53" y="308.41" width="4.88" height="4.88" fill="#f4c8d0"/><rect x="230.79" y="308.41" width="4.88" height="4.88" fill="#e8c8d0"/><rect x="37.59" y="313.24" width="4.88" height="4.88" fill="#cccccc"/><rect x="42.42" y="313.24" width="4.88" height="4.88" fill="#eeeeee"/><rect x="47.25" y="313.24" width="4.88" height="4.88" fill="#bbbbbb"/><rect x="124.53" y="313.24" width="4.88" height="4.88" fill="#f4c8d0"/><rect x="230.79" y="313.24" width="4.88" height="4.88" fill="#f4dde4"/><rect x="37.59" y="318.07" width="4.88" height="4.88" fill="#999999"/><rect x="42.42" y="318.07" width="4.88" height="4.88" fill="#e5e5e5"/><rect x="47.25" y="318.07" width="4.88" height="4.88" fill="#222222"/><rect x="52.08" y="318.07" width="4.88" height="4.88" fill="#dddddd"/><rect x="124.53" y="318.07" width="4.88" height="4.88" fill="#f4c8d0"/><rect x="230.79" y="318.07" width="4.88" height="4.88" fill="#f0d0d8"/><rect x="42.42" y="322.90" width="4.88" height="4.88" fill="#e5e5e5"/><rect x="47.25" y="322.90" width="4.88" height="4.88" fill="#888888"/><rect x="52.08" y="322.90" width="4.88" height="4.88" fill="#eeeeee"/><rect x="32.76" y="327.73" width="9.71" height="4.88" fill="#cccccc"/><rect x="42.42" y="327.73" width="4.88" height="4.88" fill="#dddddd"/><rect x="47.25" y="327.73" width="4.88" height="4.88" fill="#aaaaaa"/><rect x="52.08" y="327.73" width="4.88" height="4.88" fill="#f4f4f4"/><rect x="47.25" y="332.56" width="4.88" height="4.88" fill="#f0f0f0"/><rect x="27.93" y="342.22" width="4.88" height="4.88" fill="#999999"/><rect x="42.42" y="342.22" width="4.88" height="4.88" fill="#dddddd"/><rect x="47.25" y="342.22" width="4.88" height="4.88" fill="#e5e5e5"/><rect x="52.08" y="342.22" width="4.88" height="4.88" fill="#dddddd"/><rect x="56.91" y="342.22" width="9.71" height="4.88" fill="#cccccc"/><rect x="66.57" y="342.22" width="4.88" height="4.88" fill="#888888"/><rect x="76.23" y="342.22" width="4.88" height="4.88" fill="#cccccc"/><rect x="81.06" y="342.22" width="4.88" height="4.88" fill="#dddddd"/><rect x="85.89" y="342.22" width="4.88" height="4.88" fill="#cccccc"/><rect x="90.72" y="342.22" width="4.88" height="4.88" fill="#bbbbbb"/><rect x="95.55" y="342.22" width="4.88" height="4.88" fill="#aaaaaa"/><rect x="100.38" y="342.22" width="4.88" height="4.88" fill="#999999"/><rect x="105.21" y="342.22" width="4.88" height="4.88" fill="#555555"/><rect x="110.04" y="342.22" width="4.88" height="4.88" fill="#888888"/><rect x="114.87" y="342.22" width="14.54" height="4.88" fill="#666666"/><rect x="129.36" y="342.22" width="9.71" height="4.88" fill="#888888"/><rect x="139.02" y="342.22" width="9.71" height="4.88" fill="#555555"/><rect x="148.68" y="342.22" width="4.88" height="4.88" fill="#cccccc"/><rect x="153.51" y="342.22" width="4.88" height="4.88" fill="#dddddd"/><rect x="158.34" y="342.22" width="4.88" height="4.88" fill="#eeeeee"/><rect x="163.17" y="342.22" width="4.88" height="4.88" fill="#dddddd"/><rect x="168.00" y="342.22" width="4.88" height="4.88" fill="#eeeeee"/><rect x="172.83" y="342.22" width="4.88" height="4.88" fill="#cccccc"/><rect x="177.66" y="342.22" width="9.71" height="4.88" fill="#dddddd"/><rect x="192.15" y="342.22" width="9.71" height="4.88" fill="#cccccc"/><rect x="201.81" y="342.22" width="4.88" height="4.88" fill="#dddddd"/><rect x="206.64" y="342.22" width="4.88" height="4.88" fill="#cccccc"/><rect x="211.47" y="342.22" width="4.88" height="4.88" fill="#777777"/><rect x="216.30" y="342.22" width="4.88" height="4.88" fill="#dddddd"/><rect x="221.13" y="342.22" width="4.88" height="4.88" fill="#cccccc"/><rect x="225.96" y="342.22" width="9.71" height="4.88" fill="#dddddd"/><rect x="235.62" y="342.22" width="4.88" height="4.88" fill="#e5e5e5"/><rect x="240.45" y="342.22" width="4.88" height="4.88" fill="#888888"/><rect x="27.93" y="347.05" width="4.88" height="4.88" fill="#999999"/><rect x="42.42" y="347.05" width="9.71" height="4.88" fill="#dddddd"/><rect x="52.08" y="347.05" width="4.88" height="4.88" fill="#f4f4f4"/><rect x="56.91" y="347.05" width="4.88" height="4.88" fill="#dddddd"/><rect x="61.74" y="347.05" width="4.88" height="4.88" fill="#cccccc"/><rect x="66.57" y="347.05" width="4.88" height="4.88" fill="#888888"/><rect x="76.23" y="347.05" width="4.88" height="4.88" fill="#dddddd"/><rect x="81.06" y="347.05" width="4.88" height="4.88" fill="#f4f4f4"/><rect x="85.89" y="347.05" width="4.88" height="4.88" fill="#dddddd"/><rect x="90.72" y="347.05" width="4.88" height="4.88" fill="#bbbbbb"/><rect x="95.55" y="347.05" width="4.88" height="4.88" fill="#aaaaaa"/><rect x="100.38" y="347.05" width="4.88" height="4.88" fill="#bbbbbb"/><rect x="105.21" y="347.05" width="4.88" height="4.88" fill="#555555"/><rect x="110.04" y="347.05" width="4.88" height="4.88" fill="#dddddd"/><rect x="114.87" y="347.05" width="14.54" height="4.88" fill="#888888"/><rect x="129.36" y="347.05" width="9.71" height="4.88" fill="#dddddd"/><rect x="139.02" y="347.05" width="9.71" height="4.88" fill="#888888"/><rect x="177.66" y="347.05" width="9.71" height="4.88" fill="#e5e5e5"/><rect x="192.15" y="347.05" width="9.71" height="4.88" fill="#dddddd"/><rect x="206.64" y="347.05" width="4.88" height="4.88" fill="#cccccc"/><rect x="211.47" y="347.05" width="4.88" height="4.88" fill="#777777"/><rect x="221.13" y="347.05" width="4.88" height="4.88" fill="#cccccc"/><rect x="230.79" y="347.05" width="9.71" height="4.88" fill="#f4f4f4"/><rect x="240.45" y="347.05" width="4.88" height="4.88" fill="#999999"/><rect x="27.93" y="351.88" width="4.88" height="4.88" fill="#aaaaaa"/><rect x="52.08" y="351.88" width="4.88" height="4.88" fill="#eeeeee"/><rect x="61.74" y="351.88" width="4.88" height="4.88" fill="#dddddd"/><rect x="66.57" y="351.88" width="4.88" height="4.88" fill="#888888"/><rect x="90.72" y="351.88" width="4.88" height="4.88" fill="#cccccc"/><rect x="105.21" y="351.88" width="4.88" height="4.88" fill="#555555"/><rect x="110.04" y="351.88" width="4.88" height="4.88" fill="#dddddd"/><rect x="114.87" y="351.88" width="9.71" height="4.88" fill="#888888"/><rect x="124.53" y="351.88" width="4.88" height="4.88" fill="#999999"/><rect x="129.36" y="351.88" width="9.71" height="4.88" fill="#dddddd"/><rect x="139.02" y="351.88" width="9.71" height="4.88" fill="#888888"/><rect x="211.47" y="351.88" width="4.88" height="4.88" fill="#888888"/><rect x="240.45" y="351.88" width="4.88" height="4.88" fill="#bbbbbb"/><rect x="245.28" y="351.88" width="4.88" height="4.88" fill="#e5e5e5"/></g>
<rect x="12.50" y="34.00" width="251.20" height="365.70" rx="3" fill="none" stroke="#3f4041" stroke-width="1.3" /><rect x="19" y="32.5" width="154" height="3" fill="#1f2021"/><rect x="271.50" y="34.00" width="338.80" height="51.50" rx="3" fill="none" stroke="#3f4041" stroke-width="1.3" /><rect x="279" y="32.5" width="32" height="3" fill="#1f2021"/><rect x="271.50" y="97.70" width="338.80" height="33.50" rx="3" fill="none" stroke="#3f4041" stroke-width="1.3" /><rect x="279" y="96.2" width="48.5" height="3" fill="#1f2021"/><rect x="271.50" y="143.30" width="338.80" height="256.70" rx="3" fill="none" stroke="#3f4041" stroke-width="1.3" /><rect x="279" y="141.8" width="37" height="3" fill="#1f2021"/><rect x="293.50" y="40.70" width="243.30" height="23.30" rx="2" fill="none" stroke="#d9554d" stroke-width="2.4" /><rect x="335.00" y="43.00" width="200.00" height="17.30" rx="2" fill="#1e1f20" stroke="#525354" stroke-width="1" /><path d="M524.90 50.35 L527.60 53.15 L530.30 50.35" fill="none" stroke="#e6e6e6" stroke-width="1.05" stroke-linecap="round" stroke-linejoin="round"/><rect x="541.00" y="43.00" width="60.80" height="17.00" rx="2.5" fill="#3a3b3c" stroke="#505152" stroke-width="1" /><rect x="541.80" y="66.60" width="9.40" height="9.40" rx="1.5" fill="#1e1f20" stroke="#525354" stroke-width="1" /><rect x="335.00" y="106.30" width="200.00" height="17.10" rx="2" fill="#1e1f20" stroke="#525354" stroke-width="1" /><path d="M521.70 106.8 V122.9" stroke="#525354" stroke-width="1"/><path d="M524.90 113.55 L527.60 116.35 L530.30 113.55" fill="none" stroke="#e6e6e6" stroke-width="1.05" stroke-linecap="round" stroke-linejoin="round"/><rect x="541.00" y="106.70" width="60.80" height="17.20" rx="2.5" fill="#3a3b3c" stroke="#505152" stroke-width="1" /><rect x="335.00" y="152.30" width="222.20" height="17.00" rx="2" fill="#1e1f20" stroke="#525354" stroke-width="1" /><path d="M547.10 159.50 L549.80 162.30 L552.50 159.50" fill="none" stroke="#e6e6e6" stroke-width="1.05" stroke-linecap="round" stroke-linejoin="round"/><rect x="564.30" y="156.20" width="9.40" height="9.40" rx="1.5" fill="#1e1f20" stroke="#525354" stroke-width="1" /><circle cx="340.9" cy="181" r="4.75" fill="#1e1f20" stroke="#525354" stroke-width="1"/><circle cx="340.9" cy="181" r="2.6" fill="#fafafa"/><circle cx="394.1" cy="181" r="4.75" fill="#1e1f20" stroke="#525354" stroke-width="1"/><rect x="335.00" y="191.80" width="222.20" height="16.90" rx="2" fill="#1e1f20" stroke="#525354" stroke-width="1" /><path d="M547.10 198.95 L549.80 201.75 L552.50 198.95" fill="none" stroke="#e6e6e6" stroke-width="1.05" stroke-linecap="round" stroke-linejoin="round"/><rect x="335.00" y="213.30" width="62.30" height="16.70" rx="2" fill="#1e1f20" stroke="#525354" stroke-width="1" /><path d="M346.40 213.8 V229.5" stroke="#525354" stroke-width="1"/><path d="M335.50 221.85 H346.40" stroke="#525354" stroke-width="0.8"/><path d="M339.00 218.95 L341.40 216.65 L343.80 218.95 M339.00 224.75 L341.40 227.05 L343.80 224.75" fill="none" stroke="#c0c0c0" stroke-width="0.95" stroke-linecap="round" stroke-linejoin="round"/><rect x="404.90" y="217.70" width="9.40" height="9.40" rx="1.5" fill="#1e1f20" stroke="#3e3f40" stroke-width="1" /><path d="M407.00 222.70 L408.80 224.60 L412.30 220.20" fill="none" stroke="#505152" stroke-width="1" stroke-linecap="round" stroke-linejoin="round"/><rect x="456.80" y="217.70" width="9.40" height="9.40" rx="1.5" fill="#1e1f20" stroke="#525354" stroke-width="1" /><rect x="335.00" y="235.00" width="222.20" height="16.80" rx="2" fill="#1e1f20" stroke="#525354" stroke-width="1" /><path d="M547.10 242.10 L549.80 244.90 L552.50 242.10" fill="none" stroke="#e6e6e6" stroke-width="1.05" stroke-linecap="round" stroke-linejoin="round"/><rect x="335.00" y="256.30" width="222.20" height="16.90" rx="2" fill="#1e1f20" stroke="#525354" stroke-width="1" /><path d="M547.10 263.45 L549.80 266.25 L552.50 263.45" fill="none" stroke="#e6e6e6" stroke-width="1.05" stroke-linecap="round" stroke-linejoin="round"/><rect x="335.00" y="277.50" width="62.30" height="16.80" rx="2" fill="#1e1f20" stroke="#404142" stroke-width="1" /><path d="M346.40 278.0 V293.8" stroke="#404142" stroke-width="1"/><path d="M335.50 286.10 H346.40" stroke="#404142" stroke-width="0.8"/><path d="M339.00 283.20 L341.40 280.90 L343.80 283.20 M339.00 289.00 L341.40 291.30 L343.80 289.00" fill="none" stroke="#48494a" stroke-width="0.95" stroke-linecap="round" stroke-linejoin="round"/><rect x="335.70" y="303.20" width="9.40" height="9.40" rx="1.5" fill="#1e1f20" stroke="#525354" stroke-width="1" /><path d="M337.80 308.20 L339.60 310.10 L343.10 305.70" fill="none" stroke="#f0f0f0" stroke-width="1" stroke-linecap="round" stroke-linejoin="round"/><rect x="406.30" y="299.30" width="52.00" height="16.70" rx="2" fill="#1e1f20" stroke="#404142" stroke-width="1" /><path d="M417.70 299.8 V315.5" stroke="#404142" stroke-width="1"/><path d="M406.80 307.85 H417.70" stroke="#404142" stroke-width="0.8"/><path d="M410.30 304.95 L412.70 302.65 L415.10 304.95 M410.30 310.75 L412.70 313.05 L415.10 310.75" fill="none" stroke="#48494a" stroke-width="0.95" stroke-linecap="round" stroke-linejoin="round"/><rect x="486.30" y="299.30" width="51.20" height="16.70" rx="2" fill="#1e1f20" stroke="#404142" stroke-width="1" /><path d="M497.70 299.8 V315.5" stroke="#404142" stroke-width="1"/><path d="M486.80 307.85 H497.70" stroke="#404142" stroke-width="0.8"/><path d="M490.30 304.95 L492.70 302.65 L495.10 304.95 M490.30 310.75 L492.70 313.05 L495.10 310.75" fill="none" stroke="#48494a" stroke-width="0.95" stroke-linecap="round" stroke-linejoin="round"/><rect x="335.70" y="323.20" width="9.40" height="9.40" rx="1.5" fill="#1e1f20" stroke="#525354" stroke-width="1" /><rect x="335.70" y="341.10" width="9.40" height="9.40" rx="1.5" fill="#1e1f20" stroke="#525354" stroke-width="1" /><path d="M337.80 346.10 L339.60 348.00 L343.10 343.60" fill="none" stroke="#f0f0f0" stroke-width="1" stroke-linecap="round" stroke-linejoin="round"/><rect x="335.70" y="359.10" width="9.40" height="9.40" rx="1.5" fill="#1e1f20" stroke="#525354" stroke-width="1" /><path d="M337.80 364.10 L339.60 366.00 L343.10 361.60" fill="none" stroke="#f0f0f0" stroke-width="1" stroke-linecap="round" stroke-linejoin="round"/><rect x="335.70" y="377.20" width="9.40" height="9.40" rx="1.5" fill="#1e1f20" stroke="#525354" stroke-width="1" /><rect x="95.00" y="375.50" width="86.30" height="16.50" rx="2" fill="#1e1f20" stroke="#525354" stroke-width="1" /><rect x="12.30" y="420.20" width="58.50" height="17.30" rx="2.5" fill="#3a3b3c" stroke="#505152" stroke-width="1" /><path d="M61.90 427.10 L64.60 429.90 L67.30 427.10" fill="none" stroke="#e6e6e6" stroke-width="1.05" stroke-linecap="round" stroke-linejoin="round"/><rect x="78.30" y="420.20" width="51.20" height="17.30" rx="2.5" fill="#3a3b3c" stroke="#505152" stroke-width="1" /><rect x="137.00" y="420.20" width="61.80" height="17.30" rx="2.5" fill="#3a3b3c" stroke="#505152" stroke-width="1" /><path d="M189.40 427.10 L192.10 429.90 L194.80 427.10" fill="none" stroke="#e6e6e6" stroke-width="1.05" stroke-linecap="round" stroke-linejoin="round"/><rect x="520.50" y="420.30" width="41.30" height="17.10" rx="2.5" fill="#0b7dd4" stroke="#3f9ee4" stroke-width="1" /><rect x="569.30" y="420.30" width="41.60" height="17.10" rx="2.5" fill="#3a3b3c" stroke="#505152" stroke-width="1" /><path d="M52 380.7 V387 M57.3 380.7 L53.2 383.85 L57.3 387 Z" fill="none" stroke="#343536" stroke-width="0.9" stroke-linejoin="round"/><path d="M81 380.7 L76.2 383.85 L81 387 Z" fill="none" stroke="#343536" stroke-width="0.9" stroke-linejoin="round"/><path d="M195.6 381 L200.4 384.2 L195.6 387.4 Z" fill="none" stroke="#dcdcdc" stroke-width="0.9" stroke-linejoin="round"/><path d="M219.8 381 L224.2 384.2 L219.8 387.4 Z M225.9 381 V387.4" fill="none" stroke="#dcdcdc" stroke-width="0.9" stroke-linejoin="round"/><path d="M607.9 4.4 L615.6 12.1 M615.6 4.4 L607.9 12.1" stroke="#f0f0f0" stroke-width="1.15" fill="none"/><path d="M499.4 351.4 L528 402 L531.3 401.2 L531.7 413.6 L520 406.1 L524.2 404 L498.6 351.9 Z" fill="#e8453c" stroke="#e8453c" stroke-width="0.5" stroke-linejoin="round"/><path d="M519.6 297.3 L519.8 307.8 L522.2 305.6 L524 309.8 L525.6 309.1 L523.8 305 L527 304.8 Z" fill="#050505"/>
</svg>
<span class="t" style="left:4.60px;top:0px;transform:translateY(0.90px)"><span class="u" style="font-size:9.2px;line-height:12px;color:#fafafa;transform:scaleX(0.9234)">Print</span></span>
<span class="t" style="left:23.00px;top:27px;transform:translateY(0.70px)"><span class="u" style="font-size:9.0px;line-height:12px;color:#fafafa;transform:scaleX(0.8990)">4-19-2021 PEx Overall OHP Zoning.pdf</span></span>
<span class="t" style="left:21.30px;top:41px;transform:translateY(0.50px)"><span class="u" style="font-size:9.0px;line-height:12px;color:#fafafa;transform:scaleX(0.8566)">8.50&nbsp; x&nbsp; 11.00 Inches</span></span>
<span class="t" style="left:282.00px;top:27px;transform:translateY(0.70px)"><span class="u" style="font-size:9.0px;line-height:12px;color:#fafafa;transform:scaleX(0.9040)">Printer</span></span>
<span class="t" style="left:304.60px;top:45px;transform:translateY(0.40px)"><span class="u" style="font-size:9.0px;line-height:12px;color:#fafafa;transform:scaleX(0.8927)">Name:</span></span>
<span class="t" style="left:340.50px;top:45px;transform:translateY(0.40px)"><span class="u" style="font-size:9.0px;line-height:12px;color:#fafafa;transform:scaleX(0.8727)">Bluebeam PDF</span></span>
<span class="t" style="left:553.30px;top:45px;transform:translateY(0.40px)"><span class="u" style="font-size:9.0px;line-height:12px;color:#fafafa;transform:scaleX(0.8894)">Properties</span></span>
<span class="t" style="left:304.60px;top:64px;transform:translateY(0.70px)"><span class="u" style="font-size:9.0px;line-height:12px;color:#fafafa;transform:scaleX(0.8467)">Status:</span></span>
<span class="t" style="left:335.75px;top:64px;transform:translateY(0.70px)"><span class="u" style="font-size:9.0px;line-height:12px;color:#fafafa;transform:scaleX(0.8170)">Ready</span></span>
<span class="t" style="left:557.40px;top:64px;transform:translateY(0.70px)"><span class="u" style="font-size:9.0px;line-height:12px;color:#fafafa;transform:scaleX(0.8550)">To File</span></span>
<span class="t" style="left:282.00px;top:91px;transform:translateY(0.50px)"><span class="u" style="font-size:9.0px;line-height:12px;color:#fafafa;transform:scaleX(0.8621)">Pages (1-3)</span></span>
<span class="t" style="left:283.40px;top:108px;transform:translateY(0.70px)"><span class="u" style="font-size:9.0px;line-height:12px;color:#fafafa;transform:scaleX(0.8524)">Page Range:</span></span>
<span class="t" style="left:339.40px;top:108px;transform:translateY(0.70px)"><span class="u" style="font-size:9.0px;line-height:12px;color:#fafafa;transform:scaleX(0.8849)">All Pages (1 - 3)</span></span>
<span class="t" style="left:549.00px;top:108px;transform:translateY(0.80px)"><span class="u" style="font-size:9.0px;line-height:12px;color:#fafafa;transform:scaleX(0.9174)">Get Window</span></span>
<span class="t" style="left:282.00px;top:136px;transform:translateY(0.90px)"><span class="u" style="font-size:9.0px;line-height:12px;color:#fafafa;transform:scaleX(0.9259)">Options</span></span>
<span class="t" style="left:312.60px;top:154px;transform:translateY(0.70px)"><span class="u" style="font-size:9.0px;line-height:12px;color:#fafafa;transform:scaleX(0.7858)">Size:</span></span>
<span class="t" style="left:340.50px;top:154px;transform:translateY(0.70px)"><span class="u" style="font-size:9.0px;line-height:12px;color:#fafafa;transform:scaleX(0.9006)">Letter</span></span>
<span class="t" style="left:580.00px;top:154px;transform:translateY(0.70px)"><span class="u" style="font-size:9.0px;line-height:12px;color:#fafafa;transform:scaleX(0.9709)">Auto</span></span>
<span class="t" style="left:352.00px;top:174px;transform:translateY(0.20px)"><span class="u" style="font-size:9.0px;line-height:12px;color:#fafafa;transform:scaleX(0.9030)">Portrait</span></span>
<span class="t" style="left:405.75px;top:174px;transform:translateY(0.20px)"><span class="u" style="font-size:9.0px;line-height:12px;color:#fafafa;transform:scaleX(0.8805)">Landscape</span></span>
<span class="t" style="left:309.30px;top:194px;transform:translateY(0.20px)"><span class="u" style="font-size:9.0px;line-height:12px;color:#fafafa;transform:scaleX(0.9061)">Print:</span></span>
<span class="t" style="left:340.50px;top:194px;transform:translateY(0.20px)"><span class="u" style="font-size:9.0px;line-height:12px;color:#fafafa;transform:scaleX(0.9544)">Document &amp; Markup</span></span>
<span class="t" style="left:301.80px;top:215px;transform:translateY(0.80px)"><span class="u" style="font-size:9.0px;line-height:12px;color:#fafafa;transform:scaleX(0.8686)">Copies:</span></span>
<span class="t" style="left:388.60px;top:215px;transform:translateY(0.80px)"><span class="u" style="font-size:9.0px;line-height:12px;color:#fafafa;transform:scaleX(0.6349)">1</span></span>
<span class="t" style="left:420.50px;top:215px;transform:translateY(0.80px)"><span class="u" style="font-size:9.0px;line-height:12px;color:#505152;transform:scaleX(0.8932)">Collate</span></span>
<span class="t" style="left:472.50px;top:215px;transform:translateY(0.80px)"><span class="u" style="font-size:9.0px;line-height:12px;color:#fafafa;transform:scaleX(0.8065)">Reverse</span></span>
<span class="t" style="left:295.60px;top:237px;transform:translateY(0.20px)"><span class="u" style="font-size:9.0px;line-height:12px;color:#fafafa;transform:scaleX(0.9083)">Rotation:</span></span>
<span class="t" style="left:340.50px;top:237px;transform:translateY(0.20px)"><span class="u" style="font-size:9.0px;line-height:12px;color:#fafafa;transform:scaleX(0.9079)">Auto Rotate 90</span></span>
<span class="t" style="left:279.90px;top:258px;transform:translateY(0.60px)"><span class="u" style="font-size:9.0px;line-height:12px;color:#fafafa;transform:scaleX(0.8770)">Page Scaling:</span></span>
<span class="t" style="left:340.50px;top:258px;transform:translateY(0.60px)"><span class="u" style="font-size:9.0px;line-height:12px;color:#fafafa;transform:scaleX(0.8919)">Fit to Paper</span></span>
<span class="t" style="left:308.00px;top:279px;transform:translateY(0.80px)"><span class="u" style="font-size:9.0px;line-height:12px;color:#fafafa;transform:scaleX(0.8114)">Scale:</span></span>
<span class="t" style="left:375.00px;top:279px;transform:translateY(0.80px)"><span class="u" style="font-size:9.0px;line-height:12px;color:#505152;transform:scaleX(0.8163)">23 %</span></span>
<span class="t" style="left:351.75px;top:301px;transform:translateY(0.60px)"><span class="u" style="font-size:9.0px;line-height:12px;color:#fafafa;transform:scaleX(0.8611)">Center</span></span>
<span class="t" style="left:392.50px;top:301px;transform:translateY(0.60px)"><span class="u" style="font-size:9.0px;line-height:12px;color:#fafafa;transform:scaleX(0.7979)">X:</span></span>
<span class="t" style="left:433.75px;top:301px;transform:translateY(0.60px)"><span class="u" style="font-size:9.0px;line-height:12px;color:#505152;transform:scaleX(0.8333)">0.125</span></span>
<span class="t" style="left:472.00px;top:301px;transform:translateY(0.60px)"><span class="u" style="font-size:9.0px;line-height:12px;color:#fafafa;transform:scaleX(0.8427)">Y:</span></span>
<span class="t" style="left:528.50px;top:301px;transform:translateY(0.60px)"><span class="u" style="font-size:9.0px;line-height:12px;color:#505152;transform:scaleX(0.6944)">0</span></span>
<span class="t" style="left:351.25px;top:321px;transform:translateY(0.30px)"><span class="u" style="font-size:9.0px;line-height:12px;color:#fafafa;transform:scaleX(0.9078)">Dim Page Content</span></span>
<span class="t" style="left:351.25px;top:339px;transform:translateY(0.20px)"><span class="u" style="font-size:9.0px;line-height:12px;color:#fafafa;transform:scaleX(0.9064)">Dim Filtered Markups</span></span>
<span class="t" style="left:351.25px;top:357px;transform:translateY(0.00px)"><span class="u" style="font-size:9.0px;line-height:12px;color:#fafafa;transform:scaleX(0.8573)">Print Spaces</span></span>
<span class="t" style="left:351.25px;top:374px;transform:translateY(0.90px)"><span class="u" style="font-size:9.0px;line-height:12px;color:#fafafa;transform:scaleX(0.9060)">Print Visible Hyperlinks</span></span>
<span class="t" style="left:122.50px;top:377px;transform:translateY(0.70px)"><span class="u" style="font-size:9.0px;line-height:12px;color:#fafafa;transform:scaleX(0.8819)">1 (1 of 3)</span></span>
<span class="t" style="left:20.00px;top:422px;transform:translateY(0.70px)"><span class="u" style="font-size:9.0px;line-height:12px;color:#fafafa;transform:scaleX(0.8931)">Defaults</span></span>
<span class="t" style="left:85.75px;top:422px;transform:translateY(0.70px)"><span class="u" style="font-size:9.0px;line-height:12px;color:#fafafa;transform:scaleX(0.9051)">Advanced</span></span>
<span class="t" style="left:144.50px;top:422px;transform:translateY(0.70px)"><span class="u" style="font-size:9.0px;line-height:12px;color:#fafafa;transform:scaleX(0.8660)">Add Files</span></span>
<span class="t" style="left:533.25px;top:422px;transform:translateY(0.70px)"><span class="u" style="font-size:9.0px;line-height:12px;color:#ffffff;transform:scaleX(0.9169)">Print</span></span>
<span class="t" style="left:577.50px;top:422px;transform:translateY(0.70px)"><span class="u" style="font-size:9.0px;line-height:12px;color:#fafafa;transform:scaleX(0.8753)">Cancel</span></span>
</body></html>
